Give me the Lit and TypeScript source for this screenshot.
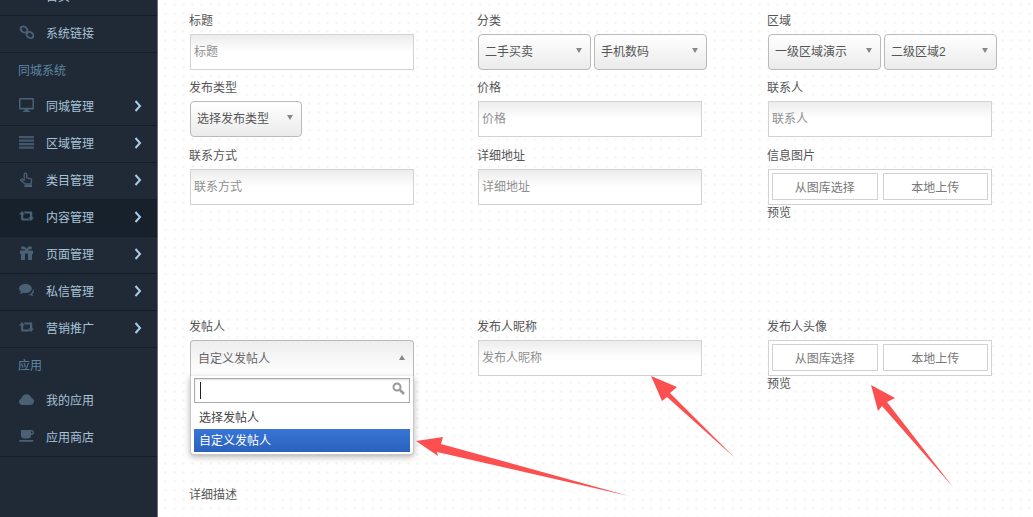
import { LitElement, html, css, svg } from "lit";
import { customElement } from "lit/decorators.js";

const icons: Record<string, unknown> = {
  link: svg`<g fill="none" stroke="currentColor" stroke-width="2"><ellipse cx="5" cy="4.500" rx="3.600" ry="2.800" transform="rotate(35 5 4.500)"/><ellipse cx="11" cy="10" rx="3.600" ry="2.800" transform="rotate(35 11 10)"/></g>`,
  desktop: svg`<path fill="currentColor" d="M1 0h13a1 1 0 0 1 1 1v9.500a1 1 0 0 1-1 1H9.500v1.500H11v1H4v-1h1.500v-1.500H1a1 1 0 0 1-1-1V1a1 1 0 0 1 1-1zm.5 1.500V9.800h12V1.500z"/>`,
  bars: svg`<path fill="currentColor" d="M0 1h15v2.200H0zM0 4.500h15v2.200H0zM0 8h15v2.200H0zM0 11.500h15v2.200H0z" opacity=".85"/>`,
  hand: svg`<path fill="none" stroke="currentColor" stroke-width="1.300" stroke-linejoin="round" d="M6.500 1.200c.8 0 1.200.6 1.200 1.400v3.200l3.700.9c.8.200 1.200.8 1.200 1.500l-.5 3.600H6L1.800 8.500c-.6-.7.300-1.800 1.200-1.300l2.200 1.100V2.600c0-.8.500-1.400 1.300-1.400z"/><path fill="currentColor" d="M5.500 12.500h7.500v2.500H5.500z"/>`,
  retweet: svg`<path fill="currentColor" d="M3 2 6 5.400H4.200v4.100h5.100L11 11.500H3.400c-.8 0-1.300-.5-1.300-1.200V5.400H0zM4.500 2.500H12c.8 0 1.300.5 1.300 1.200v4.900H15l-3 3.400-3-3.400h1.900V4.500H6.200z"/>`,
  gift: svg`<path fill="currentColor" d="M1 4.500h5V3.500H4.500C3 3.500 2 2.700 2 1.800 2 .8 3 .2 4 .2c1.500 0 2.800 1.300 3.500 2.600C8.200 1.500 9.500.2 11 .2c1 0 2 .6 2 1.600 0 .9-1 1.700-2.500 1.700H9v1h5v3.500h-1V14H9V7.500H6V14H2V8H1z"/>`,
  comments: svg`<path fill="currentColor" d="M6.500 1C10 1 12.800 3 12.800 5.500S10 10 6.500 10c-.8 0-1.500-.1-2.200-.3C3.300 10.500 2 11 .8 11c.7-.7 1.100-1.500 1.200-2.400C.8 7.800 0 6.700 0 5.500 0 3 3 1 6.500 1z"/><path fill="currentColor" d="M14 6c.7.700 1 1.400 1 2.300 0 1-.6 2-1.700 2.700.1.800.5 1.500 1.200 2.100-1.200 0-2.300-.5-3.100-1.200-.7.200-1.400.300-2.100.2C11 11.500 14 9.500 14 6z"/>`,
  cloud: svg`<path fill="currentColor" d="M3.500 13C1.500 13 0 11.500 0 9.700c0-1.500 1-2.700 2.400-3.100C2.900 4 5 2.200 7.500 2.200c2.400 0 4.400 1.600 5 3.800 1.500.5 2.500 1.900 2.500 3.500 0 2-1.600 3.500-3.500 3.500z"/>`,
  coffee: svg`<path fill="currentColor" d="M2 1h10.500C14 1 15 2 15 3.500S14 6 12.500 6H12v.5C12 8.500 10.800 9.500 9 9.500H5c-1.800 0-3-1-3-3zM12 2.500V4.500h.500c.6 0 1-.4 1-1s-.4-1-1-1z"/><path fill="currentColor" d="M0 11h14.500c0 1.300-1 1.800-2 1.800H2c-1 0-2-.5-2-1.800z"/>`,
};

const Item = (icon: string, label: string, arrow: boolean, active = false, line = true) => html`
  <div class="item ${active ? "active" : ""} ${line ? "line" : "noline"}">
    <svg class="ico" viewBox="0 0 15 15">${icons[icon]}</svg>
    <span class="lbl">${label}</span>
    ${arrow
      ? html`<svg class="chev" viewBox="0 0 8 12"><path d="M1.500 1l4.500 5-4.500 5" fill="none" stroke="currentColor" stroke-width="2"/></svg>`
      : ""}
  </div>`;

@customElement("app-root")
export class AppRoot extends LitElement {
  static styles = css`
    :host {
      display: block;
      width: 1033px;
      height: 517px;
      overflow: hidden;
      position: relative;
      font-family: "Liberation Sans", "Noto Sans CJK SC", sans-serif;
      font-size: 12px;
      color: #555;
      background-color: #fff;
      background-image: radial-gradient(circle at 4.500px 4.500px, #f0f0f0 0.6px, #fafafa 1.200px, transparent 1.800px);
      background-size: 9px 9px;
      background-position: -1px 0;
    }
    .page {
      display: flex;
      height: 517px;
    }
    .side {
      width: 157px;
      flex: none;
      background: #1f2a36;
      border-right: 1px solid #6b7278;
      overflow: hidden;
      color: #a9c3d8;
    }
    .cut {
      height: 15px;
      border-bottom: 1px solid #151d26;
      overflow: hidden;
    }
    .cut .inner {
      height: 12px;
      margin-top: -9px;
      padding-left: 46px;
      line-height: 12px;
    }
    .item {
      display: flex;
      align-items: center;
      height: 32px;
      padding: 0 0 4px 19px;
      border-bottom: 1px solid transparent;
    }
    .item.line {
      border-bottom-color: #151d26;
    }
    .item.noline {
      height: 31px;
    }
    .item.active {
      background: #17212b;
    }
    .ico {
      width: 15px;
      height: 15px;
      color: #4a6075;
      flex: none;
      margin-right: 12px;
    }
    .lbl {
      flex: 1;
    }
    .chev {
      width: 8px;
      height: 12px;
      color: #a9cbe6;
      margin-right: 15px;
      position: relative;
      top: 1px;
    }
    .sect {
      height: 33px;
      padding: 0 0 3px 18px;
      display: flex;
      align-items: center;
      color: #5f87a5;
    }
    .main {
      flex: 1;
      padding: 14px 0 0 32px;
      min-width: 0;
    }
    .row {
      display: grid;
      grid-template-columns: 288px 290px 224px;
    }
    .field {
      min-width: 0;
    }
    .label {
      height: 14px;
      line-height: 14px;
      margin-bottom: 6px;
      margin-left: -1px;
      color: #555;
    }
    .r2 {
      margin-top: 11px;
    }
    .r3 {
      margin-top: 12px;
    }
    .r4 {
      margin-top: 100px;
    }
    .input {
      box-sizing: border-box;
      height: 36px;
      width: 224px;
      border: 1px solid #d2d2d2;
      background: linear-gradient(#ececec, #fff 50%);
      color: #8f8f8f;
      display: flex;
      align-items: center;
      padding: 0 0 3px 3px;
    }
    .selrow {
      display: flex;
      gap: 3px;
    }
    .select {
      box-sizing: border-box;
      height: 36px;
      width: 113px;
      flex: none;
      border: 1px solid #b9b9b9;
      border-radius: 4px;
      background: linear-gradient(#fff, #ebebeb);
      color: #555;
      display: flex;
      align-items: center;
      justify-content: space-between;
      padding: 0 8px 3px 6px;
    }
    .select.narrow {
      width: 112px;
    }
    .caret {
      width: 0;
      height: 0;
      border-left: 3px solid transparent;
      border-right: 3px solid transparent;
      border-top: 5px solid #888;
    }
    .caret.up {
      border-top: 0;
      border-bottom: 5px solid #888;
    }
    .upload {
      box-sizing: border-box;
      width: 224px;
      height: 36px;
      border: 1px solid #d2d2d2;
      padding: 3px 3px 4px;
      display: flex;
      gap: 5px;
      background: #fff;
    }
    .btn {
      flex: 1;
      border: 1px solid #d2d2d2;
      display: flex;
      align-items: center;
      justify-content: center;
      color: #777;
    }
    .preview {
      height: 14px;
      line-height: 14px;
      margin-left: -1px;
      padding-top: 1px;
      color: #555;
    }
    .dd {
      position: relative;
      height: 36px;
    }
    .dd-head {
      box-sizing: border-box;
      width: 224px;
      height: 36px;
      border: 1px solid #b9b9b9;
      border-bottom: 0;
      border-radius: 4px 4px 0 0;
      background: linear-gradient(#eee, #fff);
      display: flex;
      align-items: center;
      justify-content: space-between;
      padding: 0 8px 2px 7px;
      color: #666;
    }
    .dd-pop {
      position: absolute;
      top: 36px;
      left: 0;
      box-sizing: border-box;
      width: 224px;
      height: 79px;
      background: #fff;
      border: 1px solid #c6c6c6;
      border-top: 0;
      border-radius: 0 0 4px 4px;
      box-shadow: 0 2px 6px rgba(0, 0, 0, 0.3);
      padding: 2px 3px;
    }
    .search {
      box-sizing: border-box;
      height: 25px;
      border: 1px solid #aaa;
      display: flex;
      align-items: center;
      justify-content: space-between;
      padding: 0 4px 0 5px;
      box-shadow: inset 0 1px 2px #ddd;
    }
    .cursor {
      width: 1px;
      height: 17px;
      background: #222;
    }
    .mag {
      width: 13px;
      height: 13px;
      color: #999;
      position: relative;
      top: -2px;
    }
    .opt {
      height: 26px;
      padding: 0 0 0 5px;
      display: flex;
      align-items: center;
      color: #444;
    }
    .opt.sel {
      height: 21px;
      padding-bottom: 2px;
      background: linear-gradient(#3875d7, #2a62bc);
      color: #fff;
    }
    .detail {
      margin-top: 97px;
      margin-left: -1px;
      height: 14px;
      line-height: 14px;
    }
    .arrows {
      position: absolute;
      left: 0;
      top: 0;
      width: 1033px;
      height: 517px;
      pointer-events: none;
    }
  `;

  render() {
    return html`
      <div class="page">
        <nav class="side">
          <div class="cut"><div class="inner">首页</div></div>
          ${Item("link", "系统链接", false)}
          <div class="sect">同城系统</div>
          ${Item("desktop", "同城管理", true)}
          ${Item("bars", "区域管理", true)}
          ${Item("hand", "类目管理", true)}
          ${Item("retweet", "内容管理", true, true)}
          ${Item("gift", "页面管理", true)}
          ${Item("comments", "私信管理", true)}
          ${Item("retweet", "营销推广", true)}
          <div class="sect">应用</div>
          ${Item("cloud", "我的应用", false, false, false)}
          ${Item("coffee", "应用商店", false)}
        </nav>
        <main class="main">
          <div class="row">
            <div class="field">
              <div class="label">标题</div>
              <div class="input">标题</div>
            </div>
            <div class="field">
              <div class="label">分类</div>
              <div class="selrow">
                <div class="select"><span>二手买卖</span><i class="caret"></i></div>
                <div class="select"><span>手机数码</span><i class="caret"></i></div>
              </div>
            </div>
            <div class="field">
              <div class="label">区域</div>
              <div class="selrow">
                <div class="select"><span>一级区域演示</span><i class="caret"></i></div>
                <div class="select"><span>二级区域2</span><i class="caret"></i></div>
              </div>
            </div>
          </div>
          <div class="row r2">
            <div class="field">
              <div class="label">发布类型</div>
              <div class="select narrow"><span>选择发布类型</span><i class="caret"></i></div>
            </div>
            <div class="field">
              <div class="label">价格</div>
              <div class="input">价格</div>
            </div>
            <div class="field">
              <div class="label">联系人</div>
              <div class="input">联系人</div>
            </div>
          </div>
          <div class="row r3">
            <div class="field">
              <div class="label">联系方式</div>
              <div class="input">联系方式</div>
            </div>
            <div class="field">
              <div class="label">详细地址</div>
              <div class="input">详细地址</div>
            </div>
            <div class="field">
              <div class="label">信息图片</div>
              <div class="upload"><div class="btn">从图库选择</div><div class="btn">本地上传</div></div>
              <div class="preview">预览</div>
            </div>
          </div>
          <div class="row r4">
            <div class="field">
              <div class="label">发帖人</div>
              <div class="dd">
                <div class="dd-head"><span>自定义发帖人</span><i class="caret up"></i></div>
                <div class="dd-pop">
                  <div class="search">
                    <span class="cursor"></span>
                    <svg class="mag" viewBox="0 0 13 13"><circle cx="5" cy="5" r="3.500" fill="none" stroke="currentColor" stroke-width="2"/><path d="M8 8l4 4" stroke="currentColor" stroke-width="2.500"/></svg>
                  </div>
                  <div class="opt">选择发帖人</div>
                  <div class="opt sel">自定义发帖人</div>
                </div>
              </div>
            </div>
            <div class="field">
              <div class="label">发布人昵称</div>
              <div class="input">发布人昵称</div>
            </div>
            <div class="field">
              <div class="label">发布人头像</div>
              <div class="upload"><div class="btn">从图库选择</div><div class="btn">本地上传</div></div>
              <div class="preview">预览</div>
            </div>
          </div>
          <div class="detail">详细描述</div>
        </main>
      </div>
      <svg class="arrows" viewBox="0 0 1033 517">
        <g fill="#fc5050">
          <polygon points="416,441 443,437 441,444 629,496 437,452 438,456"/>
          <polygon points="651,376 677,387 670,393 735,458 667,397 662,401"/>
          <polygon points="871,385 895,398 887,402 953,487 882,406 878,411"/>
        </g>
      </svg>
    `;
  }
}
